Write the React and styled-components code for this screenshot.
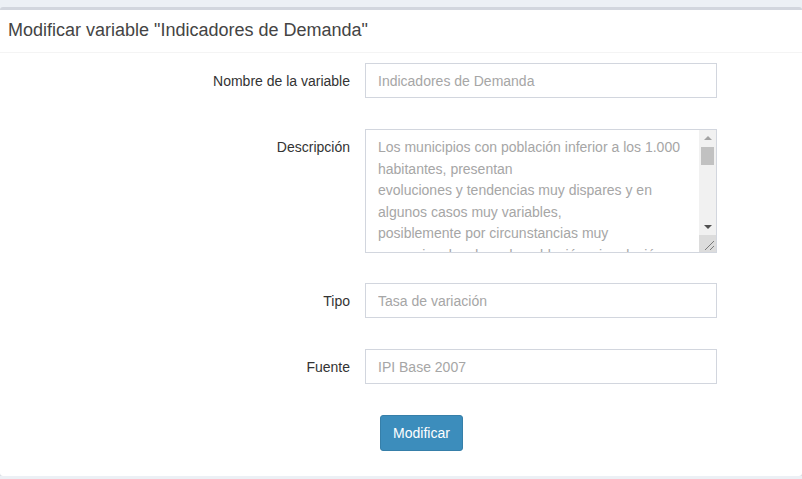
import styled, { createGlobalStyle } from 'styled-components'

const GlobalStyle = createGlobalStyle`
  body {
    margin: 0;
    background: #ecf0f5;
    font-family: "Liberation Sans", Arial, Helvetica, sans-serif;
    font-size: 14px;
    color: #333;
  }
`

const descripcion = `Los municipios con población inferior a los 1.000 habitantes, presentan
evoluciones y tendencias muy dispares y en algunos casos muy variables,
posiblemente por circunstancias muy excepcionales de cada población, sin relación con la actividad económica.`

const campos = [
  { id: 'nombre', label: 'Nombre de la variable', value: 'Indicadores de Demanda' },
  { id: 'descripcion', label: 'Descripción', value: descripcion, multiline: true },
  { id: 'tipo', label: 'Tipo', value: 'Tasa de variación' },
  { id: 'fuente', label: 'Fuente', value: 'IPI Base 2007' },
]

const FakeScrollbar = () => (
  <ScrollBar>
    <ArrowButton>
      <Arrow $dir="up" />
    </ArrowButton>
    <Track>
      <Thumb />
    </Track>
    <ArrowButton>
      <Arrow $dir="down" />
    </ArrowButton>
    <Corner>
      <svg width="17" height="17" viewBox="0 0 17 17">
        <path d="M6 15 L15 6 M11 15 L15 11" stroke="#7a7a7a" strokeWidth="1" fill="none" />
      </svg>
    </Corner>
  </ScrollBar>
)

const App = () => {
  return (
    <>
      <GlobalStyle />
      <Box>
        <BoxHeader>
          <BoxTitle>Modificar variable "Indicadores de Demanda"</BoxTitle>
        </BoxHeader>

        <Form onSubmit={(e) => e.preventDefault()}>
          {campos.map((campo) => (
            <FormGroup key={campo.id} $tall={campo.multiline}>
              <Label htmlFor={campo.id}>{campo.label}</Label>
              {campo.multiline ? (
                <TextAreaBox>
                  <TextArea id={campo.id} defaultValue={campo.value} readOnly />
                  <FakeScrollbar />
                </TextAreaBox>
              ) : (
                <Input id={campo.id} defaultValue={campo.value} readOnly />
              )}
            </FormGroup>
          ))}

          {/* botón de envío */}
          <Actions>
            <Button type="submit">Modificar</Button>
          </Actions>
        </Form>
      </Box>
    </>
  )
}

const Box = styled.div`
  margin-top: 7px;
  background: #fff;
  border-top: 3px solid #d2d6de;
  border-radius: 3px;
  box-shadow: 0 1px 0 #d2d6de;
`

const BoxHeader = styled.div`
  padding: 9px 8px 11px;
  border-bottom: 1px solid #f4f4f4;
`

const BoxTitle = styled.h3`
  margin: 0;
  font-size: 18px;
  font-weight: normal;
  line-height: 22px;
  color: #444;
`

const Form = styled.form`
  padding: 10px 0 25px;
`

const FormGroup = styled.div`
  display: grid;
  grid-template-columns: 350px 352px;
  column-gap: 15px;
  align-items: start;
  margin-bottom: ${({ $tall }) => ($tall ? '30px' : '31px')};
`

const Label = styled.label`
  text-align: right;
  padding-top: 8px;
  line-height: 20px;
  color: #333;
`

const Input = styled.input`
  box-sizing: border-box;
  width: 100%;
  height: 35px;
  margin: 0;
  padding: 6px 12px;
  border: 1px solid #d2d6de;
  border-radius: 0;
  font-family: "Liberation Sans", Arial, Helvetica, sans-serif;
  font-size: 14px;
  color: #a6a6a6;
  background: #fff;
  outline: none;
`

const TextAreaBox = styled.div`
  box-sizing: border-box;
  display: flex;
  height: 124px;
  border: 1px solid #d2d6de;
  background: #fff;
`

const TextArea = styled.textarea`
  flex: 1;
  min-width: 0;
  margin: 0;
  padding: 7px 12px 0;
  border: none;
  font-family: "Liberation Sans", Arial, Helvetica, sans-serif;
  font-size: 14px;
  line-height: 21.5px;
  color: #a6a6a6;
  background: transparent;
  overflow: hidden;
  resize: none;
  outline: none;
`

const ScrollBar = styled.div`
  display: flex;
  flex-direction: column;
  width: 17px;
  flex-shrink: 0;
  background: #f1f1f1;
`

const ArrowButton = styled.div`
  height: 17px;
  display: flex;
  align-items: center;
  justify-content: center;
`

const Arrow = styled.span`
  width: 0;
  height: 0;
  border-left: 4px solid transparent;
  border-right: 4px solid transparent;
  ${({ $dir }) =>
    $dir === 'up'
      ? 'border-bottom: 4px solid #a3a3a3; margin-top: -1px;'
      : 'border-top: 4px solid #505050; margin-top: 1px;'}
`

const Track = styled.div`
  flex: 1;
`

const Thumb = styled.div`
  height: 18px;
  margin: 0 2px;
  background: #c1c1c1;
`

const Corner = styled.div`
  height: 17px;
  background: #dcdcdc;
  line-height: 0;
`

const Actions = styled.div`
  padding-left: 380px;
`

const Button = styled.button`
  width: 83px;
  height: 36px;
  padding: 6px 12px;
  border: 1px solid #367fa9;
  border-radius: 3px;
  background: #3c8dbc;
  color: #fff;
  font-family: "Liberation Sans", Arial, Helvetica, sans-serif;
  font-size: 14px;
  cursor: pointer;
`

export default App
